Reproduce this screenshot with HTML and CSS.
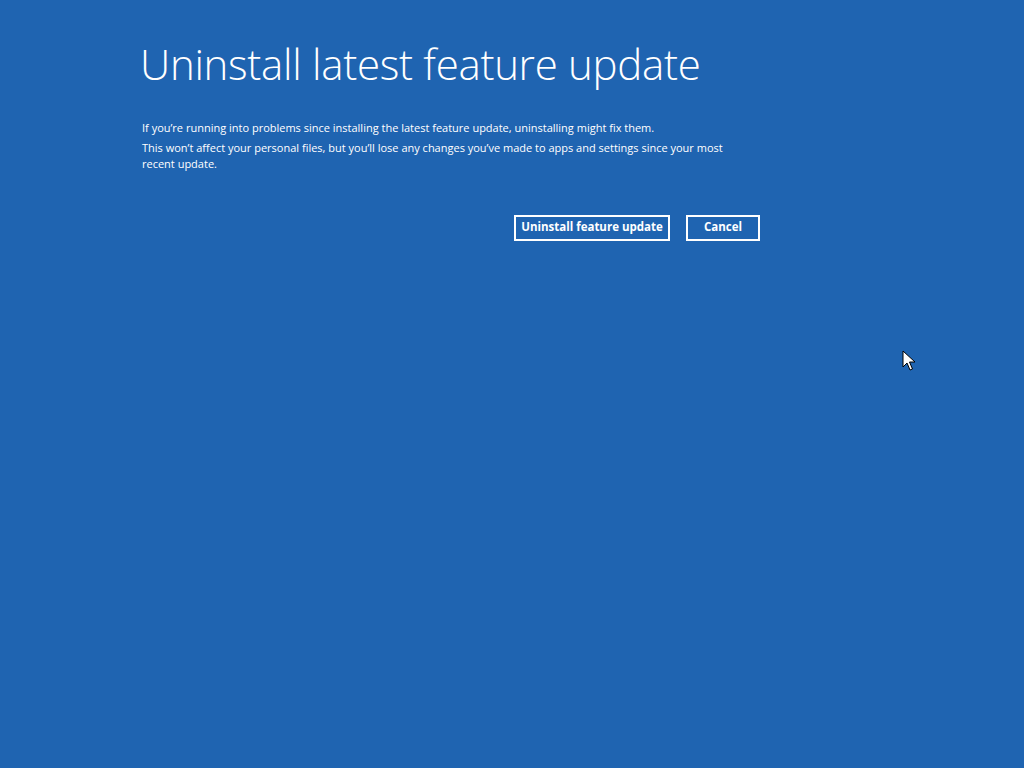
FILE: index.html
```
<!DOCTYPE html>
<html>
  <head>
    <meta charset="utf-8">
    <title>Uninstall latest feature update</title>
    <link rel="stylesheet" href="styles.css">
  </head>
  <body>
    <div class="page">
      <h1 class="title">Uninstall latest feature update</h1>
      <p class="text first">If you’re running into problems since installing the latest feature update, uninstalling might fix them.</p>
      <p class="text">This won’t affect your personal files, but you’ll lose any changes you’ve made to apps and settings since your most recent update.</p>
      <div class="actions">
        <button class="btn">Uninstall feature update</button>
        <button class="btn cancel">Cancel</button>
      </div>
    </div>
    <svg class="cursor" width="14" height="22" viewBox="0 0 14 22">
      <path d="M1 1 L1 17 L5 13 L8 20 L10.5 19 L7.5 12 L13 12 Z" fill="#fff" stroke="#000" stroke-width="1"/>
    </svg>
  </body>
</html>
```

FILE: styles.css
```
html, body {
  margin: 0;
  height: 100%;
}

body {
  background: #1f64b1;
  color: #fff;
  font-family: "Open Sans", "Liberation Sans", sans-serif;
  overflow: hidden;
}

.page {
  padding: 34px 0 0 142px;
  width: 618px;
}

.title {
  margin: 0 0 26px -2px;
  font-size: 42px;
  font-weight: 300;
  line-height: 60px;
  letter-spacing: -0.3px;
}

.text {
  margin: 0;
  font-size: 11px;
  line-height: 16px;
  width: 600px;
}

.text.first {
  margin-bottom: 4px;
}

.actions {
  display: flex;
  justify-content: flex-end;
  gap: 16px;
  margin-top: 43px;
}

.btn {
  background: transparent;
  border: 2px solid #fff;
  color: #fff;
  font-family: inherit;
  font-size: 11.5px;
  font-weight: 700;
  line-height: 20px;
  height: 26px;
  width: 156px;
  padding: 0 0 2px;
}

.btn.cancel {
  width: 74px;
}

.cursor {
  position: absolute;
  left: 902px;
  top: 350px;
}
```
